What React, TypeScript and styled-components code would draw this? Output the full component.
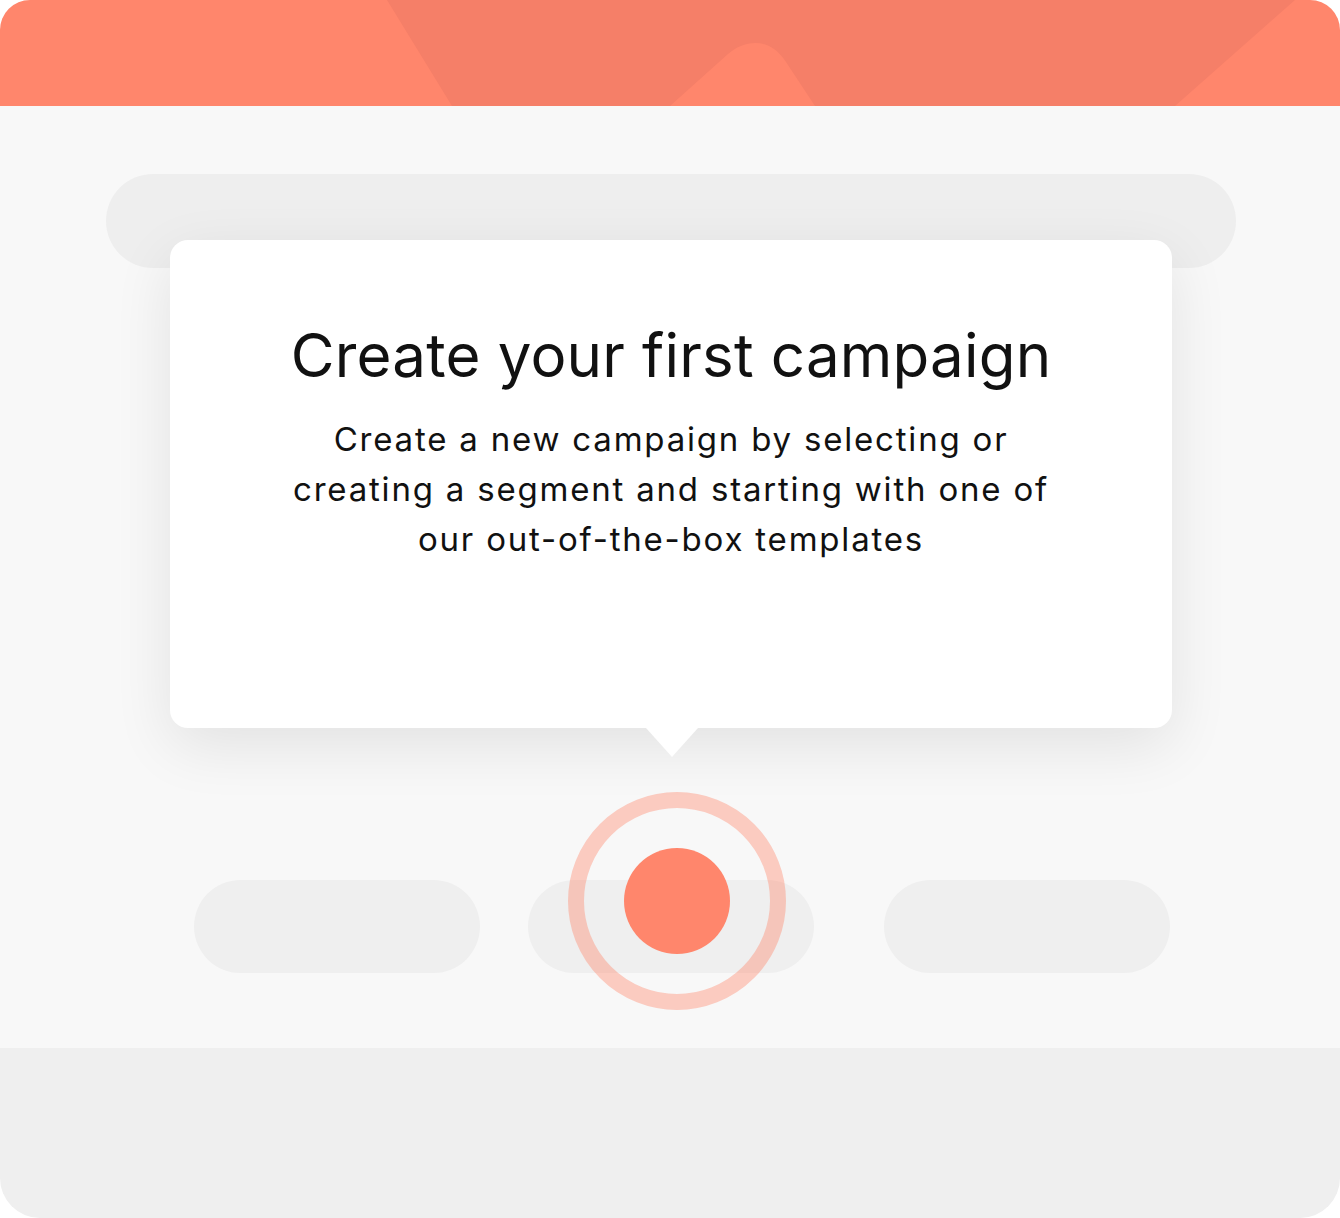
import React, { FunctionComponent, ReactElement } from 'react';
import styled, { createGlobalStyle } from 'styled-components';

const GlobalStyle = createGlobalStyle`
    html, body {
        margin: 0;
        padding: 0;
        background: #ffffff;
    }
    * {
        box-sizing: border-box;
    }
`;

const Frame = styled.div`
    width: 1340px;
    height: 1218px;
    display: flex;
    flex-direction: column;
    border-radius: 30px 30px 40px 40px;
    overflow: hidden;
    font-family: Inter, "Liberation Sans", sans-serif;
    color: #111111;
`;

const Header = styled.div`
    height: 106px;
    flex: none;
    background: #ff866c;
    svg {
        display: block;
        width: 100%;
        height: 100%;
    }
`;

const Stage = styled.div`
    height: 942px;
    flex: none;
    background: #f8f8f8;
    display: flex;
    flex-direction: column;
    align-items: center;
    padding-top: 68px;
`;

const SearchPill = styled.div`
    width: 1130px;
    height: 94px;
    border-radius: 47px;
    background: #eeeeee;
    margin-left: 2px;
`;

const Card = styled.div`
    position: relative;
    width: 1002px;
    height: 488px;
    margin-top: -28px;
    margin-left: 2px;
    background: #ffffff;
    border-radius: 18px;
    box-shadow: 0 18px 60px rgba(0, 0, 0, 0.09);
    display: flex;
    flex-direction: column;
    align-items: center;
    padding-top: 80px;
    text-align: center;

    &::after {
        content: '';
        position: absolute;
        left: 476px;
        bottom: -29px;
        border-left: 26px solid transparent;
        border-right: 26px solid transparent;
        border-top: 29px solid #ffffff;
    }
`;

const Title = styled.h1`
    margin: 0;
    font-weight: 400;
    font-size: 60px;
    line-height: 70px;
    letter-spacing: 0.2px;
`;

const Lead = styled.p`
    margin: 24px 0 0;
    white-space: nowrap;
    font-size: 33px;
    line-height: 50px;
    letter-spacing: 1.8px;
    font-weight: 400;
`;

const PillRow = styled.div`
    position: relative;
    align-self: stretch;
    display: flex;
    padding-left: 194px;
    margin-top: 152px;
`;

const Pill = styled.div<{ $gap?: number }>`
    width: 286px;
    height: 93px;
    border-radius: 47px;
    background: #efefef;
    margin-left: ${(p) => p.$gap ?? 0}px;
`;

const Target = styled.div`
    position: absolute;
    left: 568px;
    top: -88px;
    width: 218px;
    height: 218px;
    border-radius: 50%;
    border: 16px solid rgba(255, 134, 108, 0.4);
    display: flex;
    align-items: center;
    justify-content: center;
`;

const Dot = styled.div`
    width: 106px;
    height: 106px;
    border-radius: 50%;
    background: #ff866c;
`;

const Footer = styled.div`
    flex: 1;
    background: #efefef;
`;

const HeaderArt: FunctionComponent = (): ReactElement => (
    <svg viewBox="0 0 1340 106" preserveAspectRatio="none">
        <polygon points="387,0 1295,0 1175,106 452,106" fill="#f57f68" />
        <path d="M670 106 L728 54 C744 40 770 36 786 62 L815 106 Z" fill="#ff866c" />
    </svg>
);

export default function App(): ReactElement {
    return (
        <>
            <GlobalStyle />
            <Frame>
                <Header>
                    <HeaderArt />
                </Header>
                <Stage>
                    <SearchPill />
                    <Card>
                        <Title>Create your first campaign</Title>
                        <Lead>
                            Create a new campaign by selecting or
                            <br />
                            creating a segment and starting with one of
                            <br />
                            our out-of-the-box templates
                        </Lead>
                    </Card>
                    <PillRow>
                        <Pill />
                        <Pill $gap={48} />
                        <Pill $gap={70} />
                        <Target>
                            <Dot />
                        </Target>
                    </PillRow>
                </Stage>
                <Footer />
            </Frame>
        </>
    );
}
